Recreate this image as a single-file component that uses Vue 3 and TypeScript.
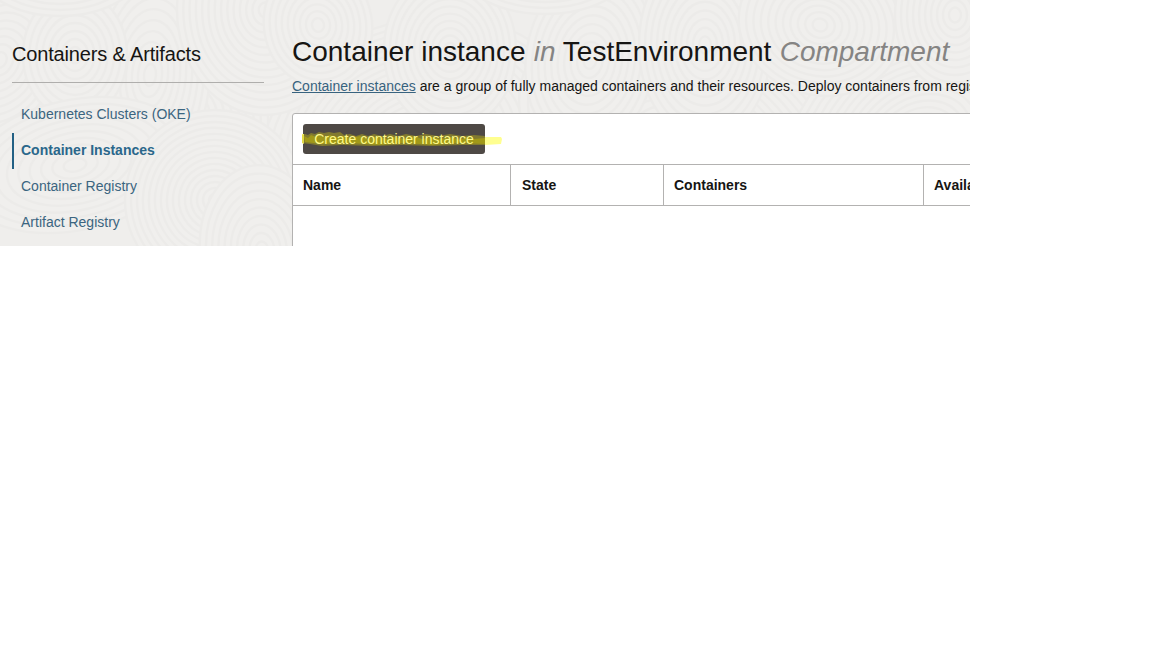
<script setup lang="ts">
interface Swirl {
  x: number
  y: number
  rx: number
  ry: number
  tilt: number
}

const navItems = [
  { label: 'Kubernetes Clusters (OKE)', active: false },
  { label: 'Container Instances', active: true },
  { label: 'Container Registry', active: false },
  { label: 'Artifact Registry', active: false },
]

const columns = ['Name', 'State', 'Containers', 'Availa']

const swirls: Swirl[] = [
  { x: 180, y: 110, rx: 150, ry: 120, tilt: 20 },
  { x: 420, y: 140, rx: 160, ry: 120, tilt: -15 },
  { x: 680, y: 140, rx: 170, ry: 110, tilt: 25 },
  { x: 920, y: 140, rx: 140, ry: 110, tilt: -30 },
  { x: 0, y: 60, rx: 70, ry: 90, tilt: 25 },
  { x: 150, y: 75, rx: 60, ry: 110, tilt: 5 },
  { x: 75, y: 55, rx: 52, ry: 64, tilt: 0 },
  { x: 265, y: 10, rx: 88, ry: 105, tilt: 0 },
  { x: 318, y: 25, rx: 54, ry: 62, tilt: -10 },
  { x: 450, y: 50, rx: 66, ry: 80, tilt: 0 },
  { x: 590, y: 60, rx: 64, ry: 90, tilt: 8 },
  { x: 705, y: 45, rx: 66, ry: 95, tilt: 0 },
  { x: 820, y: 25, rx: 82, ry: 70, tilt: 15 },
  { x: 955, y: 15, rx: 60, ry: 75, tilt: 0 },
  { x: 75, y: 165, rx: 115, ry: 65, tilt: -12 },
  { x: 215, y: 200, rx: 90, ry: 90, tilt: 15 },
  { x: 262, y: 250, rx: 62, ry: 85, tilt: -5 },
  { x: 60, y: -44, rx: 90, ry: 60, tilt: 0 },
  { x: 545, y: -46, rx: 95, ry: 60, tilt: 0 },
]

function ringScales(s: Swirl): number[] {
  const count = Math.floor(Math.min(s.rx, s.ry) / 6)
  return Array.from({ length: count }, (_, i) => 1 - i / count)
}
</script>

<template>
  <div class="console">
    <svg class="texture" width="970" height="246" viewBox="0 0 970 246" aria-hidden="true">
      <g v-for="(s, i) in swirls" :key="i" :transform="`translate(${s.x} ${s.y}) rotate(${s.tilt})`">
        <ellipse v-for="k in ringScales(s)" :key="k" :rx="s.rx * k" :ry="s.ry * k" />
      </g>
    </svg>

    <aside class="sidebar">
      <h2>Containers &amp; Artifacts</h2>
      <nav>
        <a v-for="item in navItems" :key="item.label" :class="{ active: item.active }">{{ item.label }}</a>
      </nav>
    </aside>

    <main class="content">
      <h1>Container instance <em>in</em> TestEnvironment <em>Compartment</em></h1>
      <p class="intro">
        <a>Container instances</a> are a group of fully managed containers and their resources. Deploy containers from regis
      </p>
      <section class="panel">
        <div class="toolbar">
          <button type="button">Create container instance</button>
          <svg class="marker" width="200" height="18" viewBox="0 0 200 18" aria-hidden="true">
            <path class="tail" d="M183 6H199L200 8L199 13L183 14Z" />
            <path class="lead" d="M0 3H2V13L0 12Z" />
            <path class="edge" d="M0 4L3 3L6 4L9 2L13 3L17 1L22 2L27 1L32 2L38 1L42 4L48 3L54 5L60 3L66 5L72 3L80 5L88 3L96 5L104 3L114 5L124 3L136 5L148 3L160 5L172 4L183 5V14L160 14L130 15L100 14L70 15L40 14L20 15L8 13L0 12Z" />
            <path class="core" d="M2 5L6 7L9 4L14 6L18 4L22 6L28 4L34 6L42 5L50 7L58 5L66 8L76 5L84 8L92 6L102 8L112 5L120 8L130 6L138 8L150 6L158 9L164 6L172 8L183 7V13L158 12L130 14L104 12L76 14L48 12L20 13L3 11Z" />
          </svg>
        </div>
        <div class="header-row">
          <div v-for="column in columns" :key="column" class="cell">{{ column }}</div>
        </div>
      </section>
    </main>
  </div>
</template>

<style>
body {
  margin: 0;
  background: #fff;
}
</style>

<style scoped>
.console {
  position: relative;
  display: flex;
  width: 970px;
  height: 246px;
  overflow: hidden;
  background: #efeeec;
  color: #161513;
  font-family: "Liberation Sans", Arial, sans-serif;
  font-size: 14px;
}

.texture {
  position: absolute;
  inset: 0;
}

.texture ellipse {
  fill: #f0efed;
  stroke: #ecebe9;
  stroke-width: 2.4;
}

.sidebar {
  position: relative;
  flex: none;
  width: 252px;
  margin-left: 12px;
}

h2 {
  height: 40px;
  margin: 42px 0 0;
  border-bottom: 1px solid #afaeac;
  font-size: 20px;
  font-weight: 400;
  letter-spacing: -0.16px;
  line-height: 24px;
}

nav {
  display: flex;
  flex-direction: column;
  padding-top: 14px;
}

nav a {
  height: 36px;
  border-left: 2px solid transparent;
  padding-left: 7px;
  color: #3b6580;
  line-height: 34px;
}

nav a.active {
  border-left-color: #226084;
  color: #2a678b;
  font-weight: 700;
}

.content {
  position: relative;
  flex: none;
  width: 900px;
  margin-left: 28px;
}

h1 {
  margin: 36px 0 0;
  font-size: 28px;
  font-weight: 400;
  line-height: 32px;
  white-space: nowrap;
}

h1 em {
  margin-left: 0.5px;
  color: #858483;
}

.intro {
  margin: 8px 0 0;
  line-height: 20px;
  white-space: nowrap;
}

.intro a {
  color: #38637f;
  text-decoration: underline;
}

.panel {
  height: 180px;
  margin-top: 17px;
  border: 1px solid #b3b2b1;
  border-radius: 3px;
  background: #fff;
}

.toolbar {
  position: relative;
  z-index: 0;
  height: 50px;
  padding: 10px;
  box-sizing: border-box;
}

.toolbar::before {
  content: "";
  position: absolute;
  z-index: -2;
  top: 10px;
  left: 10px;
  width: 182px;
  height: 30px;
  border-radius: 3px;
  background: #4e4945;
}

button {
  display: block;
  width: 182px;
  height: 30px;
  border: 0;
  padding: 0;
  background: transparent;
  color: #fff98a;
  font: inherit;
  line-height: 30px;
}

.marker {
  position: absolute;
  z-index: -1;
  top: 17px;
  left: 9px;
}

.marker .tail {
  fill: #ffff90;
}

.marker .lead {
  fill: #f4ef70;
}

.marker .edge {
  fill: #c9bf10;
  opacity: 0.42;
}

.marker .core {
  fill: #b8ad0c;
  opacity: 0.6;
}

.header-row {
  display: grid;
  grid-template-columns: 217px 153px 260px 1fr;
  height: 40px;
  border-top: 1px solid #b3b2b1;
  border-bottom: 1px solid #b3b2b1;
  font-weight: 700;
  line-height: 40px;
}

.cell {
  padding-left: 10px;
}

.cell + .cell {
  border-left: 1px solid #b3b2b1;
}

.cell:nth-child(2) {
  padding-left: 11px;
}
</style>
